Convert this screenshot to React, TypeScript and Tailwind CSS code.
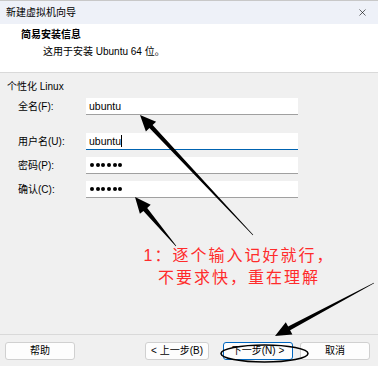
import { X } from 'lucide-react';

const fields = [
  { label: '全名(F):', value: 'ubuntu', mt: 'mt-[4px]', focus: false },
  { label: '用户名(U):', value: 'ubuntu', mt: 'mt-[18px]', focus: true },
  { label: '密码(P):', value: '', mt: 'mt-[7px]', focus: false },
  { label: '确认(C):', value: '', mt: 'mt-[7px]', focus: false },
];

function Field({ label, value, mt, focus }: { label: string; value: string; mt: string; focus: boolean }) {
  return (
    <div className={`flex items-center ${mt}`}>
      <div className="w-[86px] pl-[18px] text-[10px] leading-[14px]">{label}</div>
      <div
        className={`w-[212px] h-[17px] bg-white flex items-center pl-[3px] border-b ${
          focus ? 'border-[#0063b1]' : 'border-[#a0a0a0]'
        }`}
      >
        {value ? (
          <span className="text-[10.5px] leading-[14px] flex items-center">
            {value}
            {focus && <span className="inline-block w-px h-[12px] bg-black" />}
          </span>
        ) : (
          <div className="flex gap-[1.7px] pl-[1px]">
            {[0, 1, 2, 3, 4, 5].map((i) => (
              <span key={i} className="w-[4px] h-[4px] rounded-full bg-black" />
            ))}
          </div>
        )}
      </div>
    </div>
  );
}

function Annotations() {
  return (
    <svg className="absolute inset-0 pointer-events-none" width="378" height="366" viewBox="0 0 378 366">
      <polygon
        points="140,115 156.1,121.8 152.6,125.1 253.2,234.8 252.8,235.2 149.4,128.1 145.9,131.4"
        fill="#000"
      />
      <polygon
        points="135,197 150.7,204.8 147.2,207.9 176.2,245.8 175.8,246.2 143.4,210.9 139.9,213.8"
        fill="#000"
      />
      <polygon
        points="275,336 285.8,322.2 288.1,326.5 373.9,282.7 374.1,283.3 290.1,330.3 292.4,334.6"
        fill="#000"
      />
      <ellipse cx="264.5" cy="353.5" rx="43.5" ry="8.5" fill="none" stroke="#000" strokeWidth="1.6" />
    </svg>
  );
}

export default function App() {
  return (
    <div className="w-[378px] h-[366px] relative overflow-hidden flex flex-col bg-[#f0f0f0] text-black font-['Liberation_Sans','Noto_Sans_CJK_SC',sans-serif]">
      <div className="h-[24px] shrink-0 bg-[#eef1f8] border-t border-[#c8c8c8] flex items-center justify-between pl-[6px] pr-[10px]">
        <span className="text-[10px] leading-[14px]">新建虚拟机向导</span>
        <X className="w-[11px] h-[11px]" strokeWidth={1.3} />
      </div>

      <div className="h-[49px] shrink-0 bg-white border-b border-[#d9d9d9] pl-[21px] pt-[4px]">
        <div className="text-[10px] leading-[14px] font-bold">简易安装信息</div>
        <div className="text-[10px] leading-[14px] mt-[3px] ml-[22px]">这用于安装 Ubuntu 64 位。</div>
      </div>

      <div className="flex-1 pt-[7px]">
        <div className="pl-[7px] text-[10px] leading-[14px]">个性化 Linux</div>
        {fields.map((f) => (
          <Field key={f.label} {...f} />
        ))}
      </div>

      <div className="h-[32px] shrink-0 border-t border-[#d9d9d9] pt-[7px] flex items-start text-[10px]">
        <button className="ml-[5px] w-[70px] h-[18px] bg-[#fdfdfd] border border-[#d0d0d0] rounded-[3px] leading-none">帮助</button>
        <button className="ml-[70px] w-[64px] h-[18px] bg-[#fdfdfd] border border-[#d0d0d0] rounded-[3px] leading-none">&lt; 上一步(B)</button>
        <button className="ml-[14px] w-[70px] h-[18px] bg-[#fdfdfd] border border-[#0067c0] rounded-[3px] leading-none">下一步(N) &gt;</button>
        <button className="ml-[7px] w-[70px] h-[18px] bg-[#fdfdfd] border border-[#d0d0d0] rounded-[3px] leading-none">取消</button>
      </div>

      <div className="absolute left-[136px] top-[245px] w-[206px] text-center text-[#ff2b2b] text-[16px] leading-[22px] tracking-[2px]">
        <div>1：逐个输入记好就行，</div>
        <div>不要求快，重在理解</div>
      </div>

      <Annotations />
    </div>
  );
}
